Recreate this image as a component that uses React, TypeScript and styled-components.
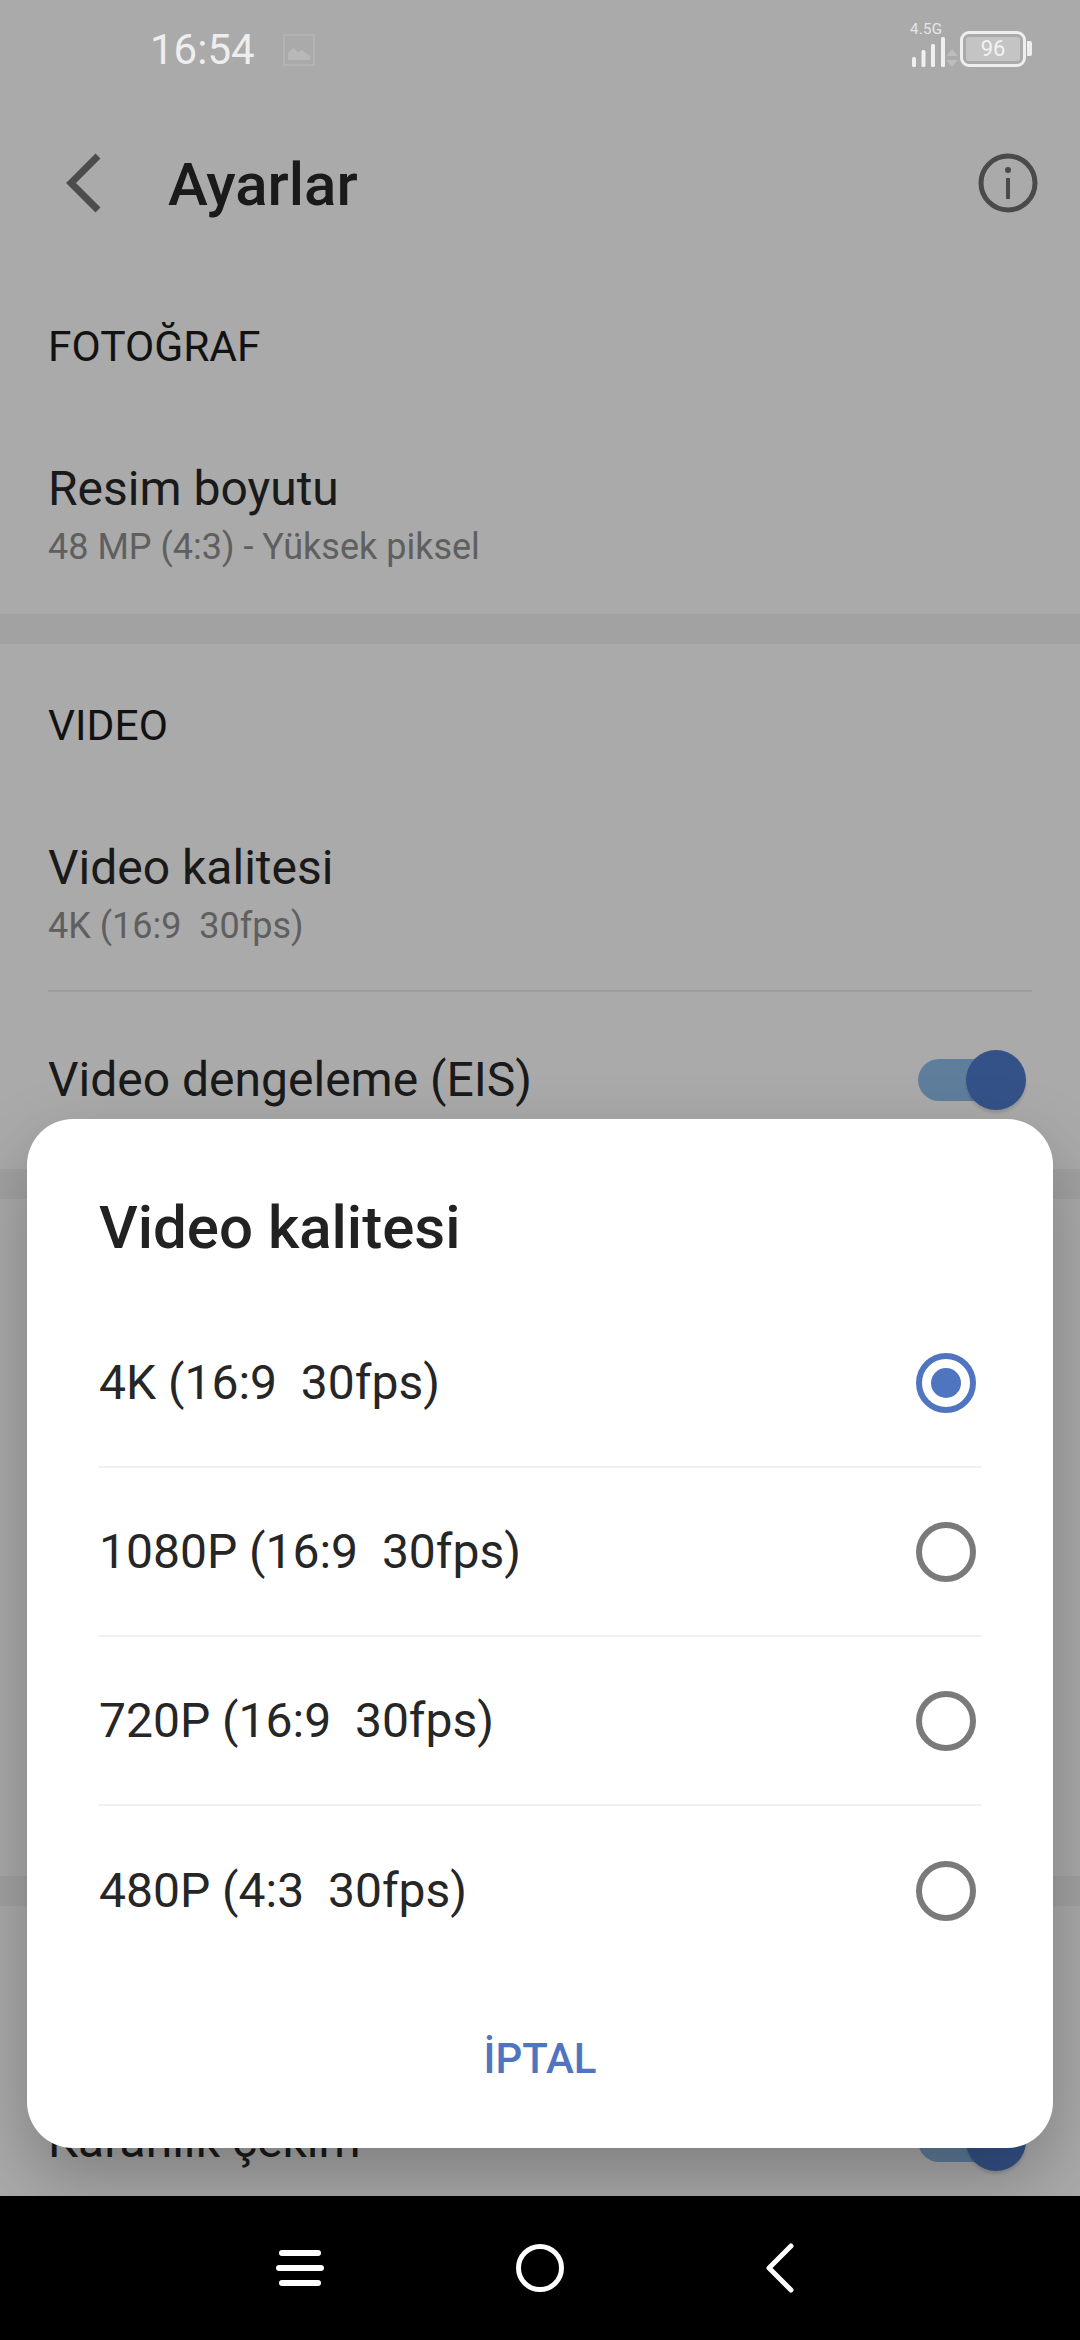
import React from "react";
import styled, { createGlobalStyle } from "styled-components";

const GlobalStyle = createGlobalStyle`
  html, body {
    margin: 0;
    padding: 0;
    background: #000;
  }
  * {
    box-sizing: border-box;
  }
`;

const Screen = styled.div`
  width: 1080px;
  height: 2340px;
  overflow: hidden;
  font-family: Roboto, "Noto Sans", sans-serif;
  display: flex;
  flex-direction: column;
`;

const Page = styled.div`
  position: relative;
  height: 2196px;
  background: #fff;
  overflow: hidden;
  flex: none;
`;

const Scrim = styled.div`
  position: absolute;
  inset: 0;
  z-index: 1;
  background: rgba(0, 0, 0, 0.333);
`;

const StatusBar = styled.div`
  position: relative;
  z-index: 2;
  height: 98px;
  display: flex;
  justify-content: space-between;
  padding: 12px 48px 0 150px;
`;

const StatusLeft = styled.div`
  display: flex;
  align-items: center;
  gap: 28px;
  height: 76px;
`;

const Clock = styled.span`
  font-size: 42px;
  color: #eeeeee;
  line-height: 1;
`;

const StatusRight = styled.div`
  display: flex;
  align-items: flex-end;
  height: 55px;
`;

const SignalBox = styled.div`
  display: flex;
  flex-direction: column;
  width: 50px;
`;

const NetLabel = styled.span`
  font-size: 15px;
  line-height: 13px;
  color: #e6e6e6;
  letter-spacing: 0.3px;
`;

const Battery = styled.div`
  width: 66px;
  height: 36px;
  border: 3px solid #eeeeee;
  border-radius: 9px;
  padding: 3px;
  display: flex;
`;

const BatteryFill = styled.div`
  flex: 1;
  background: #c4c4c4;
  border-radius: 3px;
  color: #f2f2f2;
  font-size: 22px;
  line-height: 24px;
  text-align: center;
`;

const BatteryNub = styled.div`
  width: 5px;
  height: 15px;
  margin: 0 0 11px 1px;
  background: #eeeeee;
  border-radius: 0 2px 2px 0;
`;

const TopBar = styled.div`
  height: 170px;
  display: flex;
  align-items: center;
  padding: 0 42px 0 66px;
`;

const Title = styled.h1`
  flex: 1;
  margin: 2px 0 0 66px;
  font-size: 60px;
  font-weight: 500;
  color: #272727;
`;

const Section = styled.section<{ $height: number }>`
  height: ${p => p.$height}px;
  padding: 0 48px;
  display: flex;
  flex-direction: column;
`;

const SectionLabel = styled.div<{ $top: number }>`
  margin-top: ${p => p.$top}px;
  height: 44px;
  line-height: 44px;
  font-size: 42.5px;
  font-weight: 450;
  color: #1c1c1c;
`;

const Band = styled.div`
  height: 30px;
  flex: none;
  background: #f3f3f3;
`;

const Row = styled.div`
  margin-top: 93px;
`;

const RowTitle = styled.div`
  font-size: 48px;
  line-height: 54px;
  color: #272727;
`;

const RowSub = styled.div`
  margin-top: 10px;
  font-size: 36px;
  line-height: 42px;
  color: #8f8f8f;
  white-space: pre;
`;

const Rule = styled.div`
  height: 2px;
  margin-top: 43px;
  background: #ececec;
`;

const ToggleRow = styled.div<{ $top: number }>`
  margin-top: ${p => p.$top}px;
  height: 60px;
  display: flex;
  align-items: center;
  justify-content: space-between;
`;

const Toggle = styled.div`
  position: relative;
  width: 84px;
  height: 42px;
  margin-right: 30px;
  border-radius: 21px;
  background: #8fbeea;
  flex: none;
`;

const Knob = styled.div`
  position: absolute;
  top: -9px;
  right: -24px;
  width: 60px;
  height: 60px;
  border-radius: 50%;
  background: #4f7bcc;
  box-shadow: 0 3px 3px rgba(0, 0, 0, 0.12);
`;

const Dialog = styled.div`
  position: absolute;
  z-index: 3;
  left: 27px;
  top: 1119px;
  width: 1026px;
  height: 1029px;
  background: #fff;
  border-radius: 46px;
  box-shadow: 0 30px 70px rgba(0, 0, 0, 0.26);
  padding: 0 72px;
  display: flex;
  flex-direction: column;
`;

const DialogTitle = styled.h2`
  margin: 74px 0 0;
  height: 70px;
  line-height: 70px;
  font-size: 60px;
  font-weight: 500;
  color: #222222;
`;

const Options = styled.div`
  margin-top: 36px;
  display: flex;
  flex-direction: column;
`;

const Option = styled.div`
  height: 169px;
  display: flex;
  align-items: center;
  justify-content: space-between;
  font-size: 48px;
  color: #262626;
  white-space: pre;
  border-bottom: 2px solid #f0f0f0;
  &:last-child {
    border-bottom: none;
  }
`;

const Radio = styled.div<{ $checked?: boolean }>`
  width: 60px;
  height: 60px;
  margin-right: 5px;
  border-radius: 50%;
  border: 6px solid ${p => (p.$checked ? "#4f75c0" : "#7a7a7a")};
  display: flex;
  align-items: center;
  justify-content: center;
  &::after {
    content: "";
    display: ${p => (p.$checked ? "block" : "none")};
    width: 30px;
    height: 30px;
    border-radius: 50%;
    background: #4f75c0;
  }
`;

const CancelButton = styled.button`
  align-self: center;
  margin-top: 53px;
  background: none;
  border: none;
  padding: 0;
  font-family: inherit;
  font-size: 42px;
  font-weight: 500;
  color: #4f75c0;
  height: 60px;
`;

const NavBar = styled.nav`
  height: 144px;
  flex: none;
  background: #000;
  display: flex;
  justify-content: center;
`;

const NavSlot = styled.div`
  width: 240px;
  display: flex;
  align-items: center;
  justify-content: center;
`;

const qualities = ["4K (16:9  30fps)", "1080P (16:9  30fps)", "720P (16:9  30fps)", "480P (4:3  30fps)"];

const ImageIcon = () => (
  <svg width="32" height="32" viewBox="0 0 32 32">
    <rect x="1" y="1" width="30" height="30" fill="none" stroke="#b3b3b3" strokeWidth="2" />
    <path d="M5 26v-7l5-5 5 4 4-2 8 6v4z" fill="#b8b8b8" />
  </svg>
);

const SignalIcon = () => (
  <svg width="50" height="31" viewBox="0 0 50 31">
    <g fill="#f0f0f0">
      <rect x="2" y="21" width="4" height="10" rx="1.500" />
      <rect x="11.500" y="14" width="4" height="17" rx="1.500" />
      <rect x="21" y="8" width="4" height="23" rx="1.500" />
      <rect x="31" y="1" width="4" height="30" rx="1.500" />
    </g>
    <path d="M42 13l5.500 7h-11zM42 31l-5.500-7h11z" fill="#bdbdbd" />
  </svg>
);

const BackIcon = () => (
  <svg width="36" height="60" viewBox="0 0 36 60">
    <path d="M32 3L5 30l27 27" fill="none" stroke="#727272" strokeWidth="7" />
  </svg>
);

const InfoIcon = () => (
  <svg width="60" height="60" viewBox="0 0 60 60">
    <circle cx="30" cy="30" r="27" fill="none" stroke="#707070" strokeWidth="5" />
    <circle cx="30" cy="17" r="3" fill="#707070" />
    <rect x="28" y="25" width="4" height="21" fill="#707070" />
  </svg>
);

const MenuIcon = () => (
  <svg width="48" height="36" viewBox="0 0 48 36">
    <rect x="3" y="0" width="42" height="6" rx="3" fill="#fff" />
    <rect x="0" y="15" width="48" height="6" rx="3" fill="#fff" />
    <rect x="3" y="30" width="42" height="6" rx="3" fill="#fff" />
  </svg>
);

const HomeIcon = () => (
  <svg width="48" height="48" viewBox="0 0 48 48">
    <circle cx="24" cy="24" r="21.500" fill="none" stroke="#fff" strokeWidth="5" />
  </svg>
);

const NavBackIcon = () => (
  <svg width="28" height="50" viewBox="0 0 28 50">
    <path d="M25 3L3 25l22 22" fill="none" stroke="#fff" strokeWidth="5" strokeLinecap="round" strokeLinejoin="round" />
  </svg>
);

export default function App() {
  return (
    <Screen>
      <GlobalStyle />
      <Page>
        <StatusBar>
          <StatusLeft>
            <Clock>16:54</Clock>
            <ImageIcon />
          </StatusLeft>
          <StatusRight>
            <SignalBox>
              <NetLabel>4.5G</NetLabel>
              <SignalIcon />
            </SignalBox>
            <Battery>
              <BatteryFill>96</BatteryFill>
            </Battery>
            <BatteryNub />
          </StatusRight>
        </StatusBar>

        <TopBar>
          <BackIcon />
          <Title>Ayarlar</Title>
          <InfoIcon />
        </TopBar>

        <Section $height={346}>
          <SectionLabel $top={57}>FOTOĞRAF</SectionLabel>
          <Row>
            <RowTitle>Resim boyutu</RowTitle>
            <RowSub>48 MP (4:3) - Yüksek piksel</RowSub>
          </Row>
        </Section>
        <Band />

        <Section $height={525}>
          <SectionLabel $top={60}>VIDEO</SectionLabel>
          <Row>
            <RowTitle>Video kalitesi</RowTitle>
            <RowSub>4K (16:9  30fps)</RowSub>
          </Row>
          <Rule />
          <ToggleRow $top={58}>
            <RowTitle>Video dengeleme (EIS)</RowTitle>
            <Toggle>
              <Knob />
            </Toggle>
          </ToggleRow>
        </Section>
        <Band />

        <Section $height={677} />
        <Band />

        <Section $height={290}>
          <ToggleRow $top={205}>
            <RowTitle>Karanlık çekim</RowTitle>
            <Toggle>
              <Knob />
            </Toggle>
          </ToggleRow>
        </Section>

        <Scrim />

        <Dialog>
          <DialogTitle>Video kalitesi</DialogTitle>
          <Options>
            {qualities.map((q, i) => (
              <Option key={q}>
                {q}
                <Radio $checked={i === 0} />
              </Option>
            ))}
          </Options>
          <CancelButton>İPTAL</CancelButton>
        </Dialog>
      </Page>

      <NavBar>
        <NavSlot>
          <MenuIcon />
        </NavSlot>
        <NavSlot>
          <HomeIcon />
        </NavSlot>
        <NavSlot>
          <NavBackIcon />
        </NavSlot>
      </NavBar>
    </Screen>
  );
}
